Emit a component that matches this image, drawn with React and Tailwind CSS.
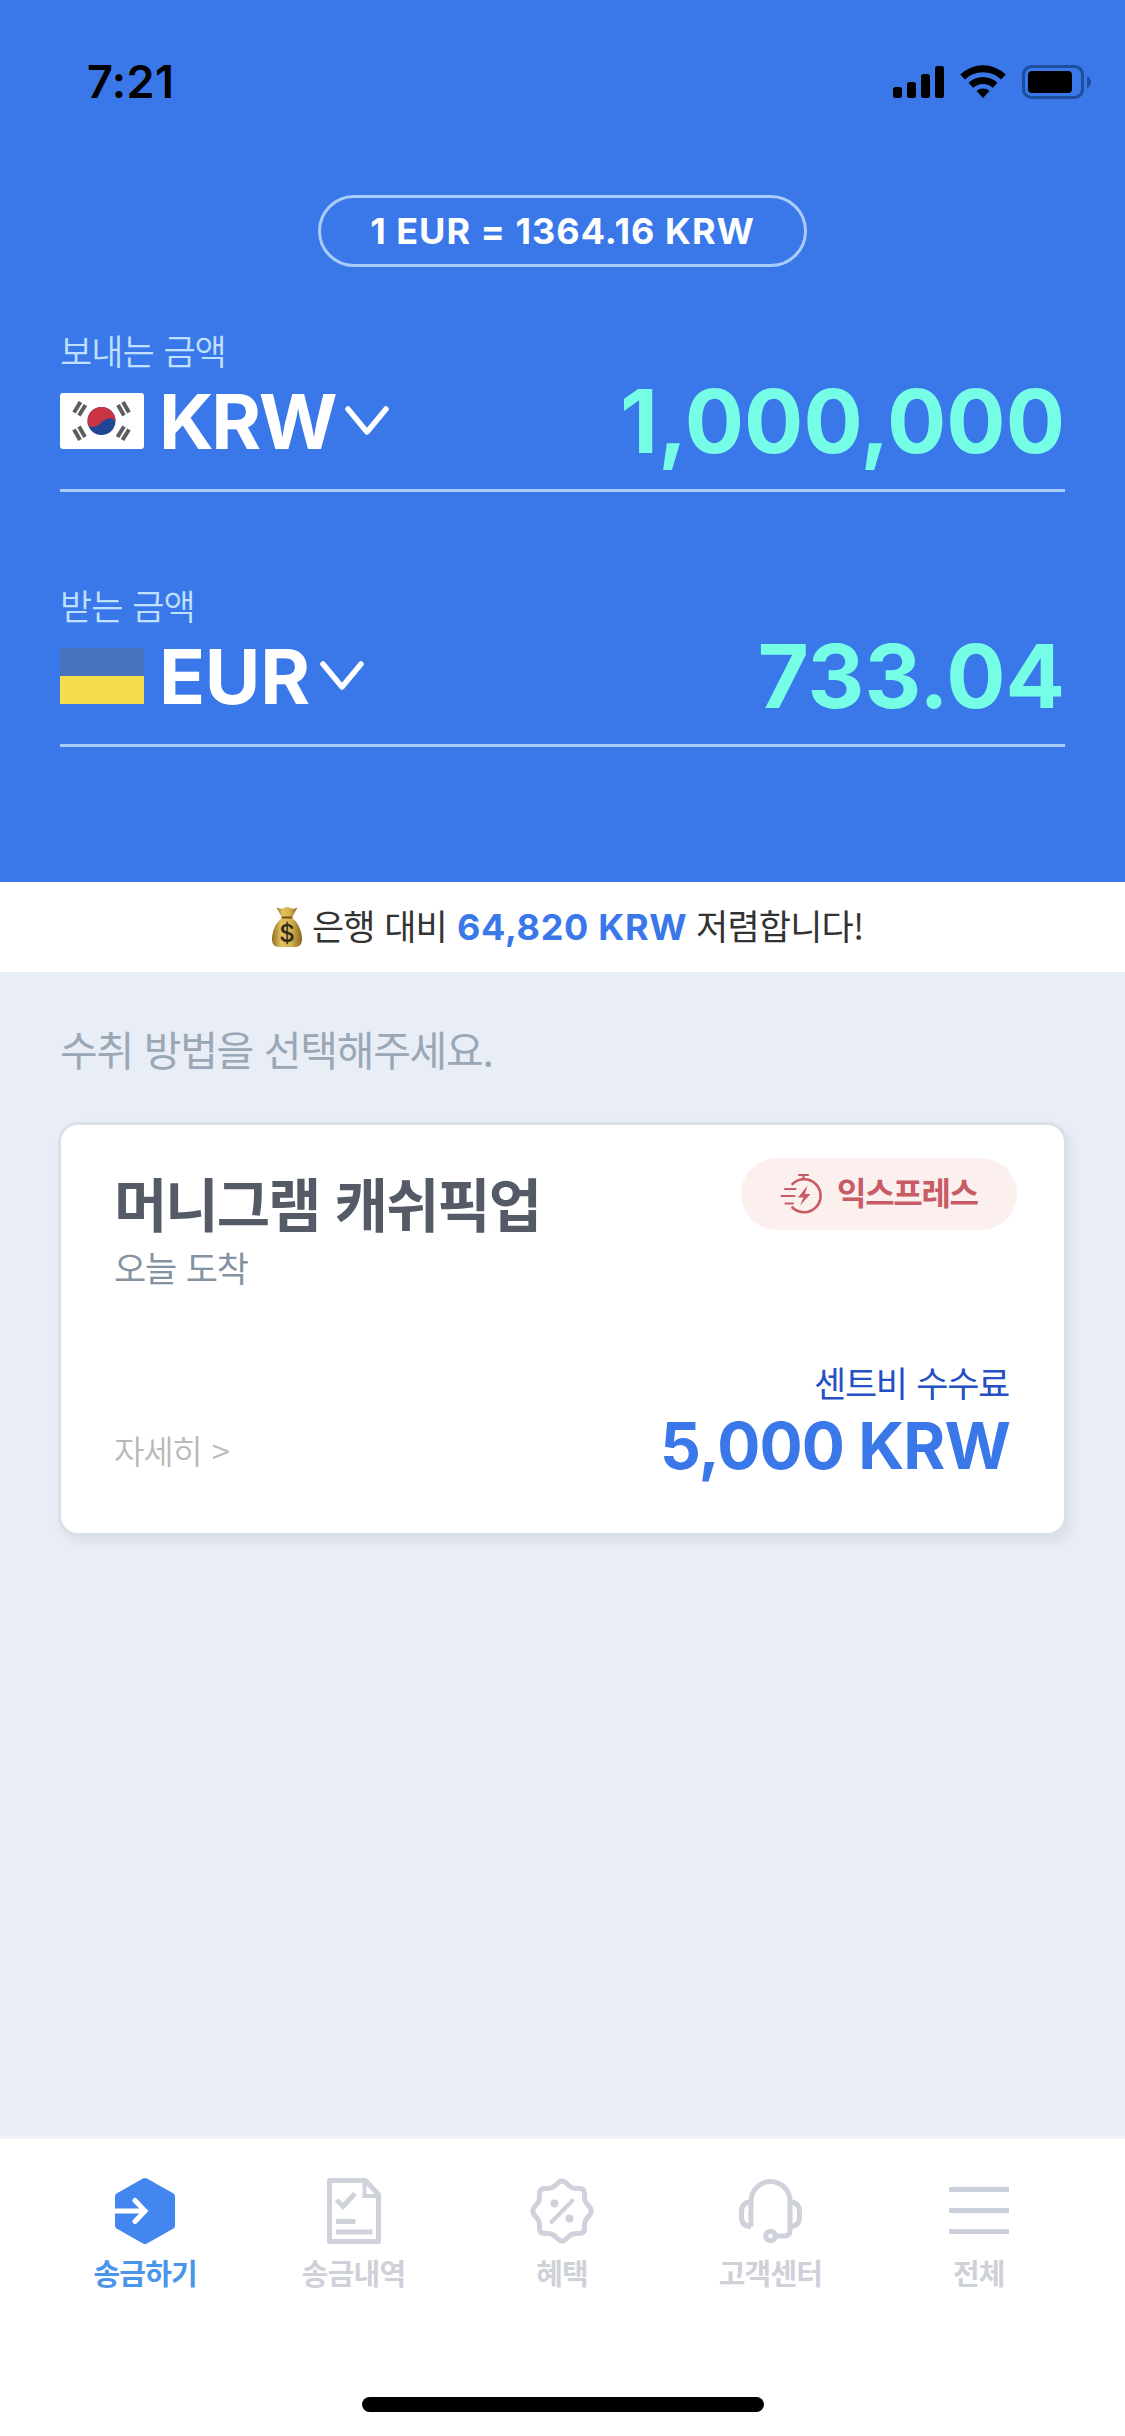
import React from 'react';

const KR = "font-['Noto_Sans_CJK_KR',sans-serif]";

const StatusBar = () => (
    <div className="mt-[56px] flex h-[51px] items-center justify-between pl-[87px] pr-[34px]">
        <span className="text-[45px] font-semibold leading-[51px] tracking-[0.4px] text-black">7:21</span>
        <svg width="198" height="34" viewBox="893 65 198 34" className="mt-[1px]">
            <rect x="893" y="87" width="9" height="11" rx="2.5" />
            <rect x="907" y="82" width="9" height="16" rx="2.5" />
            <rect x="921" y="74" width="9" height="24" rx="2.5" />
            <rect x="935" y="66" width="9" height="32" rx="2.5" />
            <path d="M960.3 74.5a32.5 32.5 0 0 1 45.4 0l-4.6 5a26 26 0 0 0-36.2 0z" />
            <path d="M968.5 82.8a21 21 0 0 1 29 0l-4.6 5a14.5 14.5 0 0 0-19.8 0z" />
            <path d="M976.5 91a10 10 0 0 1 13 0l-6.5 7z" />
            <rect x="1023.5" y="66.5" width="59" height="31" rx="8" fill="none" stroke="#1d4f9c" strokeWidth="3" />
            <rect x="1028" y="71" width="44" height="22" rx="4" />
            <path d="M1087 76q4 2 4 6t-4 6z" fill="#1d4f9c" />
        </svg>
    </div>
);

const KoreaFlag = () => (
    <svg width="84" height="56" viewBox="0 0 84 56">
        <rect width="84" height="56" rx="3" fill="#fff" />
        <circle cx="41.5" cy="28" r="14" fill="#1f4795" />
        <path d="M27.5 28a14 14 0 0 1 28 0c-3-4-9-4-14 1.5s-11 5-13.5 3z" fill="#c93545" />
        <g stroke="#5d5e5d" strokeWidth="4">
            <path d="M20.5 9L14 19.5M25.5 12L19 22.5" />
            <path d="M63 9l6 10.5M58 12l6 10.5" />
            <path d="M14 36.5L20 47M19 33.5L25 44" />
            <path d="M69 36.5L62.5 47M64 33.5L57.5 44" />
        </g>
    </svg>
);

const UkraineFlag = () => (
    <svg width="84" height="56" viewBox="0 0 84 56">
        <rect width="84" height="28" fill="#4874bd" />
        <rect y="28" width="84" height="28" fill="#f5dd4f" />
    </svg>
);

const CurrencyField = ({ label, flag, code, codeClass, amount }) => (
    <div className="border-b-[3px] border-[#a8cdfa] pb-[21px]">
        <div className={`${KR} h-[48px] text-[35px] font-[350] leading-[48px] tracking-[-1px] [word-spacing:3px] text-[#bfe0ff]`}>{label}</div>
        <div className="flex h-[94px] items-center">
            {flag}
            <span className={`ml-[15px] text-[76px] font-bold leading-[94px] text-white ${codeClass}`}>{code}</span>
            <svg width="44" height="30" viewBox="0 0 44 30" className="ml-[10px]">
                <path d="M3 3l19 23L41 3" fill="none" stroke="#fff" strokeWidth="5.5" strokeLinecap="round" strokeLinejoin="round" />
            </svg>
            <span className="ml-auto text-[88px] font-bold leading-[94px] text-[#75fde6]">{amount}</span>
        </div>
    </div>
);

const MoneyBag = () => (
    <svg width="32" height="42" viewBox="0 0 32 42">
        <defs>
            <linearGradient id="bag" x1="0" x2="1">
                <stop offset="0" stopColor="#8d6a22" />
                <stop offset="0.3" stopColor="#e3c262" />
                <stop offset="0.65" stopColor="#d5af4c" />
                <stop offset="1" stopColor="#886420" />
            </linearGradient>
        </defs>
        <path d="M5.5 1.5q4 2 7 .5 4-2 7 0 4 1.5 7-.5l-5.5 10h-10z" fill="url(#bag)" />
        <path d="M11 12C5 16 1 25 1 33c0 6 3 8 7 8h16c4 0 7-2 7-8 0-8-4-17-10-21z" fill="url(#bag)" />
        <path d="M10.5 11.5h11" stroke="#7a4f1c" strokeWidth="2" />
        <text x="16" y="36" textAnchor="middle" fontSize="24" fontWeight="500" fill="#2f2a1c">$</text>
    </svg>
);

const ExpressIcon = () => (
    <svg width="44" height="42" viewBox="0 0 44 42" fill="none" stroke="#c75b66" strokeWidth="2.7" strokeLinecap="round">
        <path d="M12.5 11A16.5 16.5 0 1 1 12.5 34.5" />
        <path d="M19 2h9M23.5 2v4M5 16h10.5M1.5 23h13M5.5 30.5H13" strokeWidth="2.2" />
        <path d="M27.5 12.5L18 24.5h5.5L20 32.500 30.500 21h-5.500z" fill="#c75b66" stroke="none" />
    </svg>
);

const SendIcon = () => (
    <svg width="60" height="66" viewBox="0 0 60 66">
        <path d="M28 .6q2-1 4 0L58.5 15.5Q60 16.5 60 18.5v29q0 2-1.5 3L32 65.4q-2 1-4 0L1.5 50.5Q0 49.5 0 47.5v-29q0-2 1.5-3z" fill="#4486ef" />
        <path d="M0 33h30M20 22.5L30 33 20 43.5" fill="none" stroke="#fff" strokeWidth="5" strokeLinecap="round" />
    </svg>
);

const HistoryIcon = () => (
    <svg width="54" height="66" viewBox="0 0 54 66" fill="none" stroke="#cfd1db" strokeWidth="5">
        <path d="M2.5 2.5h36l13 14v47h-49z" strokeLinejoin="round" />
        <path d="M37.5 2.5V18h14" strokeWidth="4" />
        <path d="M9.5 22l6.5 6.5L28 15.5" />
        <path d="M9 43.5h19.5M9 54h36.5" />
    </svg>
);

const BenefitIcon = () => (
    <svg width="66" height="66" viewBox="0 0 66 66" fill="none" stroke="#cfd1db" strokeWidth="5">
        <path
            d="M29.5 4.5q3.5-3 7 0l4 3.7q2.5 2.3 6 2.3h4q5 0 5 5v4q0 3.5 2.3 6l3.2 4q2.5 3.5 0 7l-3.2 4q-2.3 2.5-2.3 6v4q0 5-5 5h-4q-3.5 0-6 2.3l-4 3.7q-3.5 3-7 0l-4-3.7q-2.5-2.3-6-2.3h-4q-5 0-5-5v-4q0-3.5-2.3-6l-3.2-4q-2.5-3.5 0-7l3.2-4q2.3-2.5 2.3-6v-4q0-5 5-5h4q3.5 0 6-2.3z"
            strokeLinejoin="round"
        />
        <path d="M22.5 44l21-21.5" strokeWidth="4" strokeLinecap="round" />
        <circle cx="25.5" cy="25.5" r="4" fill="#cfd1db" stroke="none" />
        <circle cx="40.5" cy="40.5" r="4" fill="#cfd1db" stroke="none" />
    </svg>
);

const SupportIcon = () => (
    <svg width="66" height="66" viewBox="0 0 66 66" fill="none" stroke="#cfd1db" strokeWidth="5" strokeLinejoin="round">
        <path d="M14 48.5v-25a19.5 20 0 0 1 39 0V52q0 6-6 6h-8" />
        <path d="M14 24q-9.500 0-9.500 10v5q0 9.500 9.500 9.500M53 24q9.500 0 9.500 10v5q0 9.500-9.500 9.500" />
        <circle cx="33.5" cy="58" r="4.8" />
    </svg>
);

const MenuIcon = () => (
    <svg width="60" height="66" viewBox="0 0 60 66" fill="#cbcfda">
        <rect y="9" width="60" height="5" />
        <rect y="30" width="60" height="5" />
        <rect y="51" width="60" height="5" />
    </svg>
);

const tabs = [
    { label: '송금하기', icon: SendIcon, active: true },
    { label: '송금내역', icon: HistoryIcon },
    { label: '혜택', icon: BenefitIcon },
    { label: '고객센터', icon: SupportIcon },
    { label: '전체', icon: MenuIcon },
];

const App = () => (
    <div className="flex h-[2436px] w-[1125px] flex-col overflow-hidden bg-[#e9edf5] font-['Inter','Noto_Sans_CJK_KR',sans-serif]">
        <header className="flex h-[882px] shrink-0 flex-col bg-[#3a78e9]">
            <StatusBar />
            <div className="mt-[88px] flex h-[72px] w-[489px] items-center justify-center self-center rounded-full border-[3px] border-[#a8cdfa] text-[36px] font-bold tracking-[1px] text-white">
                1 EUR = 1364.16 KRW
            </div>
            <div className="mt-[59px] flex flex-col gap-[89px] px-[60px]">
                <CurrencyField label="보내는 금액" flag={<KoreaFlag />} code="KRW" codeClass="tracking-[-2.4px]" amount="1,000,000" />
                <CurrencyField label="받는 금액" flag={<UkraineFlag />} code="EUR" codeClass="tracking-[-0.3px]" amount="733.04" />
            </div>
        </header>

        {/* Savings banner */}
        <div className="flex h-[90px] shrink-0 items-center bg-white pl-[271px] text-[#333]">
            <MoneyBag />
            <span className={`${KR} mb-[4px] ml-[9px] w-[135px] whitespace-nowrap text-[35px] tracking-[-1px] [word-spacing:3px]`}>은행 대비</span>
            <span className="ml-[10px] w-[229px] whitespace-nowrap text-[36px] font-bold tracking-[0.7px] text-[#3a78e9]">64,820 KRW</span>
            <span className={`${KR} mb-[4px] ml-[10px] text-[35px] tracking-[-0.8px]`}>저렴합니다!</span>
        </div>

        <main className="flex-1 px-[58px] pt-[46px]">
            <h2 className={`${KR} ml-[2px] h-[60px] text-[41px] leading-[60px] tracking-[-1.3px] [word-spacing:3px] text-[#9aa7b6]`}>
                수취 방법을 선택해주세요.
            </h2>

            <section className="mt-[44px] flex h-[414px] flex-col justify-between rounded-[20px] border-[3px] border-[#d9e0e8] bg-white pb-[49px] pl-[53px] pr-[47px] pt-[33px] shadow-[4px_6px_10px_rgba(150,160,160,0.18)]">
                <div className="flex justify-between">
                    <div>
                        <h3 className={`${KR} mt-[6px] h-[76px] text-[58px] font-bold leading-[76px] tracking-[-2px] [word-spacing:4px] text-[#555a67]`}>머니그램 캐쉬픽업</h3>
                        <p className={`${KR} mt-[2px] h-[50px] text-[35px] leading-[50px] tracking-[-1.2px] [word-spacing:3px] text-[#8492a2]`}>오늘 도착</p>
                    </div>
                    <div className="flex h-[72px] w-[276px] items-center rounded-full bg-[#fcf0ef] pl-[39px]">
                        <ExpressIcon />
                        <span className={`${KR} mb-[7px] ml-[13px] text-[32px] font-bold tracking-[-1.3px] text-[#c75b66]`}>익스프레스</span>
                    </div>
                </div>
                <div className="flex items-end justify-between pr-[7px]">
                    <span className={`${KR} mb-[4px] text-[33px] font-[350] leading-[60px] tracking-[-1.2px] [word-spacing:4px] text-[#b9b9b9]`}>자세히 &gt;</span>
                    <div className="flex flex-col items-end">
                        <span className={`${KR} mb-[2px] mr-[1px] text-[35px] leading-[48px] tracking-[-1.3px] [word-spacing:3px] text-[#2450c4]`}>센트비 수수료</span>
                        <span className="text-[64px] font-bold leading-[76px] tracking-[-0.9px] text-[#3a78e9]">5,000 KRW</span>
                    </div>
                </div>
            </section>
        </main>

        <nav className="flex h-[300px] shrink-0 flex-col items-center border-t-[3px] border-[#f2f4f9] bg-white pt-[39px]">
            <div className="mr-[1px] flex w-[1042px]">
                {tabs.map(({ label, icon: Icon, active }) => (
                    <button key={label} className="flex flex-1 flex-col items-center">
                        <Icon />
                        <span className={`${KR} mt-[6px] text-[29px] font-bold leading-[44px] tracking-[-0.8px] ${active ? 'text-[#4a95ea]' : 'text-[#cfd1d9]'}`}>{label}</span>
                    </button>
                ))}
            </div>
            <div className="mt-auto mb-[24px] h-[15px] w-[402px] rounded-full bg-black" />
        </nav>
    </div>
);

export default App;
